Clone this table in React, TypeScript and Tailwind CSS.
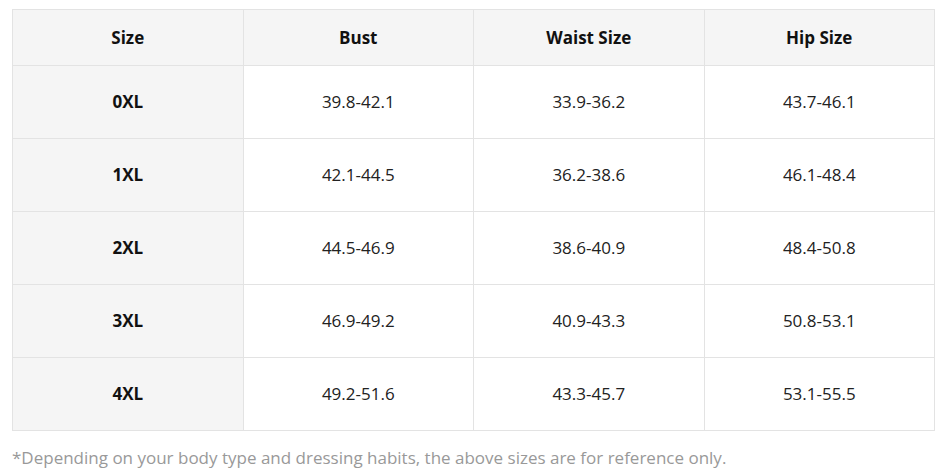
const header = ['Size', 'Bust', 'Waist Size', 'Hip Size'];

const rows = [
  ['0XL', '39.8-42.1', '33.9-36.2', '43.7-46.1'],
  ['1XL', '42.1-44.5', '36.2-38.6', '46.1-48.4'],
  ['2XL', '44.5-46.9', '38.6-40.9', '48.4-50.8'],
  ['3XL', '46.9-49.2', '40.9-43.3', '50.8-53.1'],
  ['4XL', '49.2-51.6', '43.3-45.7', '53.1-55.5'],
];

export default function App() {
  return (
    <div className="min-h-[473px] bg-white pl-[12px] pr-[10px] pt-[9px] font-['Open_Sans',sans-serif] text-[17px] text-[#111]">
      <table className="w-full table-fixed border-collapse border border-[#e3e3e3]">
        <thead>
          <tr className="h-[56px] bg-[#f5f5f5]">
            {header.map((h) => (
              <th key={h} className="border border-[#e3e3e3] text-center font-bold">
                {h}
              </th>
            ))}
          </tr>
        </thead>
        <tbody>
          {rows.map((row) => (
            <tr key={row[0]} className="h-[73px]">
              {row.map((cell, i) => (
                <td
                  key={i}
                  className={`border border-[#e3e3e3] text-center ${
                    i === 0 ? 'bg-[#f5f5f5] font-bold' : 'bg-white text-[#222]'
                  }`}
                >
                  {cell}
                </td>
              ))}
            </tr>
          ))}
        </tbody>
      </table>
      <p className="mt-[14px] leading-[26px] text-[#999]">
        *Depending on your body type and dressing habits, the above sizes are for reference only.
      </p>
    </div>
  );
}
